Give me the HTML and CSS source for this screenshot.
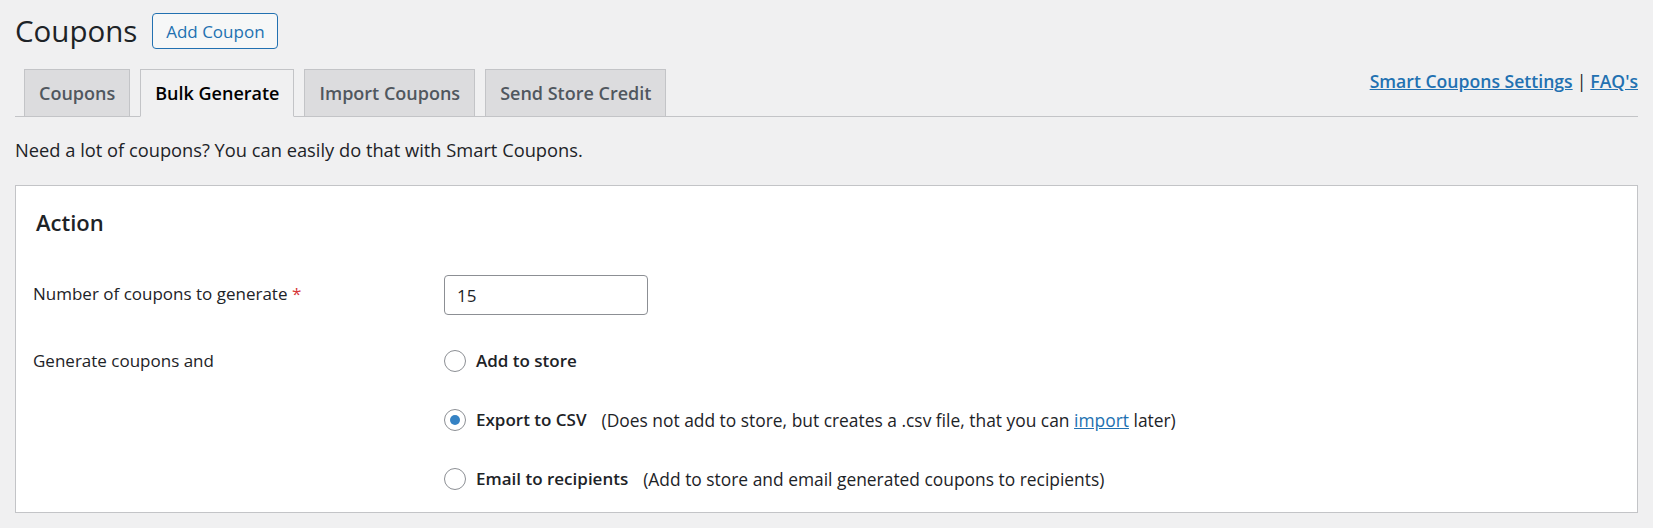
FILE: index.html
```html
<!DOCTYPE html>
<html lang="en">
<head>
<meta charset="utf-8">
<title>Coupons - Bulk Generate</title>
<link rel="stylesheet" href="styles.css">
</head>
<body>
<div class="wrap">
  <div class="page-header">
    <h1 class="page-title">Coupons</h1>
    <a class="add-btn" href="#">Add Coupon</a>
  </div>

  <nav class="tab-bar">
    <div class="tabs">
      <a class="tab" href="#">Coupons</a>
      <a class="tab tab-active" href="#">Bulk Generate</a>
      <a class="tab" href="#">Import Coupons</a>
      <a class="tab" href="#">Send Store Credit</a>
    </div>
    <div class="side-links">
      <a href="#">Smart Coupons Settings</a><span class="sep">|</span><a href="#">FAQ's</a>
    </div>
  </nav>

  <p class="intro">Need a lot of coupons? You can easily do that with Smart Coupons.</p>

  <section class="panel">
    <h2 class="panel-title">Action</h2>
    <div class="form-grid">
      <div class="field-label field-label-mid">Number of coupons to generate <span class="req">*</span></div>
      <div class="field-control field-control-mid">
        <input class="num-input" type="text" value="15">
      </div>

      <div class="field-label">Generate coupons and</div>
      <div class="field-control radio-list">
        <label class="radio-item">
          <span class="radio"></span>
          <span class="radio-name">Add to store</span>
        </label>
        <label class="radio-item">
          <span class="radio radio-checked"></span>
          <span class="radio-name">Export to CSV</span>
          <span class="radio-note">(Does not add to store, but creates a .csv file, that you can <a href="#">import</a> later)</span>
        </label>
        <label class="radio-item">
          <span class="radio"></span>
          <span class="radio-name">Email to recipients</span>
          <span class="radio-note">(Add to store and email generated coupons to recipients)</span>
        </label>
      </div>
    </div>
  </section>
</div>
</body>
</html>
```

FILE: styles.css
```css
* {
  box-sizing: border-box;
}

html, body {
  margin: 0;
  padding: 0;
}

body {
  background: #f0f0f1;
  color: #1d2327;
  font-family: "Open Sans", "Noto Sans", "DejaVu Sans", sans-serif;
  font-size: 17px;
}

.wrap {
  padding: 0 15px;
}

/* Header */
.page-header {
  display: flex;
  align-items: center;
  margin-top: 13px;
  height: 36px;
}

.page-title {
  margin: 0;
  font-size: 29.5px;
  font-weight: 400;
  line-height: 36px;
  color: #1d2327;
}

.add-btn {
  display: inline-flex;
  align-items: center;
  justify-content: center;
  margin-left: 15px;
  width: 126px;
  height: 36px;
  border: 1px solid #2271b1;
  border-radius: 4px;
  background: #f6f7f7;
  color: #2271b1;
  font-size: 17px;
  text-decoration: none;
}

/* Tabs */
.tab-bar {
  display: flex;
  margin-top: 20px;
  border-bottom: 1px solid #c3c4c7;
}

.tabs {
  display: flex;
  padding-left: 9px;
  gap: 10px;
}

.tab {
  display: block;
  height: 47px;
  padding: 0 14px;
  border: 1px solid #c3c4c7;
  border-bottom: none;
  background: #dcdcde;
  color: #50575e;
  font-size: 18px;
  font-weight: 600;
  line-height: 46px;
  text-decoration: none;
}

.tab-active {
  background: #f0f0f1;
  color: #000;
  height: 48px;
  margin-bottom: -1px;
  border-bottom: 1px solid #f0f0f1;
}

.side-links {
  margin-left: auto;
  align-self: flex-start;
  font-size: 17.6px;
  font-weight: 600;
  line-height: 24px;
}

.side-links a {
  color: #2271b1;
  text-decoration: underline;
}

.sep {
  margin: 0 4px;
  color: #1d2327;
  font-weight: 400;
}

/* Intro */
.intro {
  margin: 20px 0 0;
  font-size: 18.3px;
  line-height: 26px;
}

/* Panel */
.panel {
  margin-top: 22px;
  background: #fff;
  border: 1px solid #c3c4c7;
  padding: 21px 0 22px 17px;
}

.panel-title {
  margin: 0 0 0 3px;
  font-size: 22px;
  font-weight: 600;
  line-height: 30px;
  color: #1d2327;
}

.form-grid {
  display: grid;
  grid-template-columns: 411px 1fr;
  row-gap: 35px;
  margin-top: 38px;
}

.field-label {
  font-size: 17px;
  line-height: 22px;
}

.field-label-mid {
  align-self: center;
  margin-top: -3px;
}

.req {
  color: #d63638;
}

.num-input {
  display: block;
  width: 204px;
  height: 40px;
  padding: 0 12px;
  border: 1px solid #8c8f94;
  border-radius: 4px;
  background: #fff;
  color: #1d2327;
  font-family: inherit;
  font-size: 17px;
  outline: none;
}

.radio-list {
  display: flex;
  flex-direction: column;
  gap: 37px;
}

.radio-item {
  display: flex;
  align-items: center;
  height: 22px;
  font-size: 17px;
  line-height: 22px;
  white-space: nowrap;
}

.radio {
  position: relative;
  flex: none;
  width: 22px;
  height: 22px;
  border: 1px solid #8c8f94;
  border-radius: 50%;
  background: #fff;
}

.radio-checked::after {
  content: "";
  position: absolute;
  left: 5px;
  top: 5px;
  width: 10px;
  height: 10px;
  border-radius: 50%;
  background: #3582c4;
}

.radio-name {
  margin-left: 10px;
  font-weight: 600;
}

.radio-note {
  margin-left: 15px;
  font-size: 17.4px;
}

.radio-note a {
  color: #2271b1;
  text-decoration: underline;
}
```
